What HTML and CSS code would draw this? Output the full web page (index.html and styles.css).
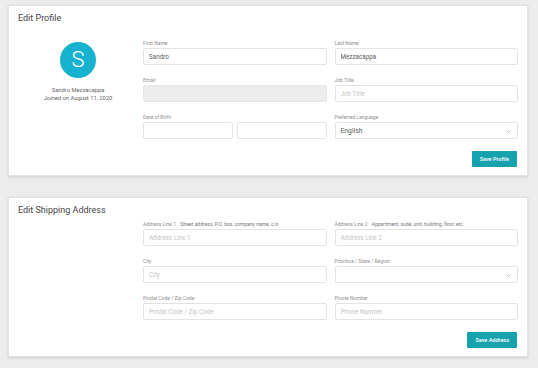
FILE: index.html
```html
<!DOCTYPE html>
<html lang="en">
<head>
  <meta charset="UTF-8" />
  <title>Edit Profile</title>
  <link rel="stylesheet" href="styles.css">
</head>
<body>
  <!-- Profile card -->
  <div class="card">
    <h2>Edit Profile</h2>
    <div class="card-body profile-body">
      <div class="profile-side">
        <div class="avatar">S</div>
        <p class="user-name">Sandro Mezzacappa</p>
        <p class="user-joined">Joined on August 11, 2020</p>
      </div>

      <div class="form-grid">
        <div class="field">
          <label>First Name</label>
          <input type="text" value="Sandro" />
        </div>
        <div class="field">
          <label>Last Name</label>
          <input type="text" value="Mezzacappa" />
        </div>
        <div class="field">
          <label>Email</label>
          <input type="text" disabled />
        </div>
        <div class="field">
          <label>Job Title</label>
          <input type="text" placeholder="Job Title" />
        </div>
        <div class="field">
          <label>Date of Birth</label>
          <div class="split">
            <input type="text" />
            <input type="text" />
          </div>
        </div>
        <div class="field">
          <label>Preferred Language</label>
          <div class="select-box">
            <span>English</span>
            <svg class="chevron" viewBox="0 0 10 6" width="5" height="3"><path d="M1 1l4 4 4-4" fill="none" stroke="#999" stroke-width="1.4"/></svg>
          </div>
        </div>
        <div class="actions">
          <button class="btn">Save Profile</button>
        </div>
      </div>
    </div>
  </div>

  <!-- Shipping card -->
  <div class="card">
    <h2>Edit Shipping Address</h2>
    <div class="card-body shipping-body">
      <div class="profile-side"></div>

      <div class="form-grid">
        <div class="field">
          <label>Address Line 1 <span class="hint">Street address, P.O. box, company name, c/o</span></label>
          <input type="text" placeholder="Address Line 1" />
        </div>
        <div class="field">
          <label>Address Line 2 <span class="hint">Appartment, suite, unit, building, floor, etc.</span></label>
          <input type="text" placeholder="Address Line 2" />
        </div>
        <div class="field">
          <label>City</label>
          <input type="text" placeholder="City" />
        </div>
        <div class="field">
          <label>Province / State / Region</label>
          <div class="select-box">
            <span></span>
            <svg class="chevron" viewBox="0 0 10 6" width="5" height="3"><path d="M1 1l4 4 4-4" fill="none" stroke="#999" stroke-width="1.4"/></svg>
          </div>
        </div>
        <div class="field">
          <label>Postal Code / Zip Code</label>
          <input type="text" placeholder="Postal Code / Zip Code" />
        </div>
        <div class="field">
          <label>Phone Number</label>
          <input type="text" placeholder="Phone Number" />
        </div>
        <div class="actions">
          <button class="btn">Save Address</button>
        </div>
      </div>
    </div>
  </div>
</body>
</html>
```

FILE: styles.css
```css
 body {
   font-family: Roboto, 'Liberation Sans', sans-serif;
   background: #ececec;
   color: #444;
   margin: 0;
   padding: 5px 10px 0 8px;
 }

 /* Cards */
 .card {
   background: #fff;
   border: 1px solid #e2e2e2;
   box-shadow: 0 1px 3px rgba(0, 0, 0, 0.12);
   padding: 7px 9px 8px;
   margin-bottom: 21px;
 }
 .card h2 {
   font-size: 9px;
   line-height: 11px;
   font-weight: 400;
   color: #444;
   margin: 0;
 }

 .card-body {
   display: grid;
   grid-template-columns: 120px 1fr;
   gap: 5px;
 }
 .profile-body {
   margin-top: 16px;
 }
 .shipping-body {
   margin-top: 5px;
 }

 /* Avatar column */
 .profile-side {
   display: flex;
   flex-direction: column;
   align-items: center;
   padding-top: 2px;
 }
 .avatar {
   width: 36px;
   height: 36px;
   border-radius: 50%;
   background: #17b2cf;
   color: #fff;
   font-size: 22px;
   font-weight: 300;
   line-height: 36px;
   text-align: center;
 }
 .profile-side p {
   margin: 0;
   font-size: 5.8px;
   line-height: 8px;
   color: #666;
 }
 .user-name {
   margin-top: 8px !important;
 }

 /* Form */
 .form-grid {
   display: grid;
   grid-template-columns: 1fr 1fr;
   column-gap: 8px;
   row-gap: 12px;
 }
 .field label {
   display: block;
   font-size: 5px;
   line-height: 6px;
   color: #8f8f8f;
   margin-bottom: 2px;
   white-space: nowrap;
 }
 .field .hint {
   color: #777;
   margin-left: 3px;
 }
 .field input, .select-box {
   display: block;
   width: 100%;
   height: 17px;
   box-sizing: border-box;
   border: 1px solid #e3e3e3;
   border-radius: 2px;
   padding: 0 5px;
   font-family: inherit;
   font-size: 6.3px;
   color: #5a5a5a;
   background: #fff;
   outline: none;
 }
 .field input::placeholder {
   color: #c4c4c4;
 }
 .field input:disabled {
   background: #ececec;
   border-color: #e6e6e6;
 }

 .split {
   display: grid;
   grid-template-columns: 1fr 1fr;
   gap: 4px;
 }

 .select-box {
   position: relative;
   display: flex;
   align-items: center;
   font-size: 6.8px;
 }
 .select-box .chevron {
   position: absolute;
   right: 6px;
   top: 7px;
 }

 .actions {
   grid-column: 1 / 3;
   display: flex;
   justify-content: flex-end;
   padding-right: 1px;
 }
 .btn {
   background: #17a3ae;
   color: #fff;
   border: none;
   border-radius: 1px;
   font-family: inherit;
   font-size: 5.5px;
   font-weight: 500;
   height: 16px;
   padding: 0 8px;
   cursor: pointer;
 }
```
